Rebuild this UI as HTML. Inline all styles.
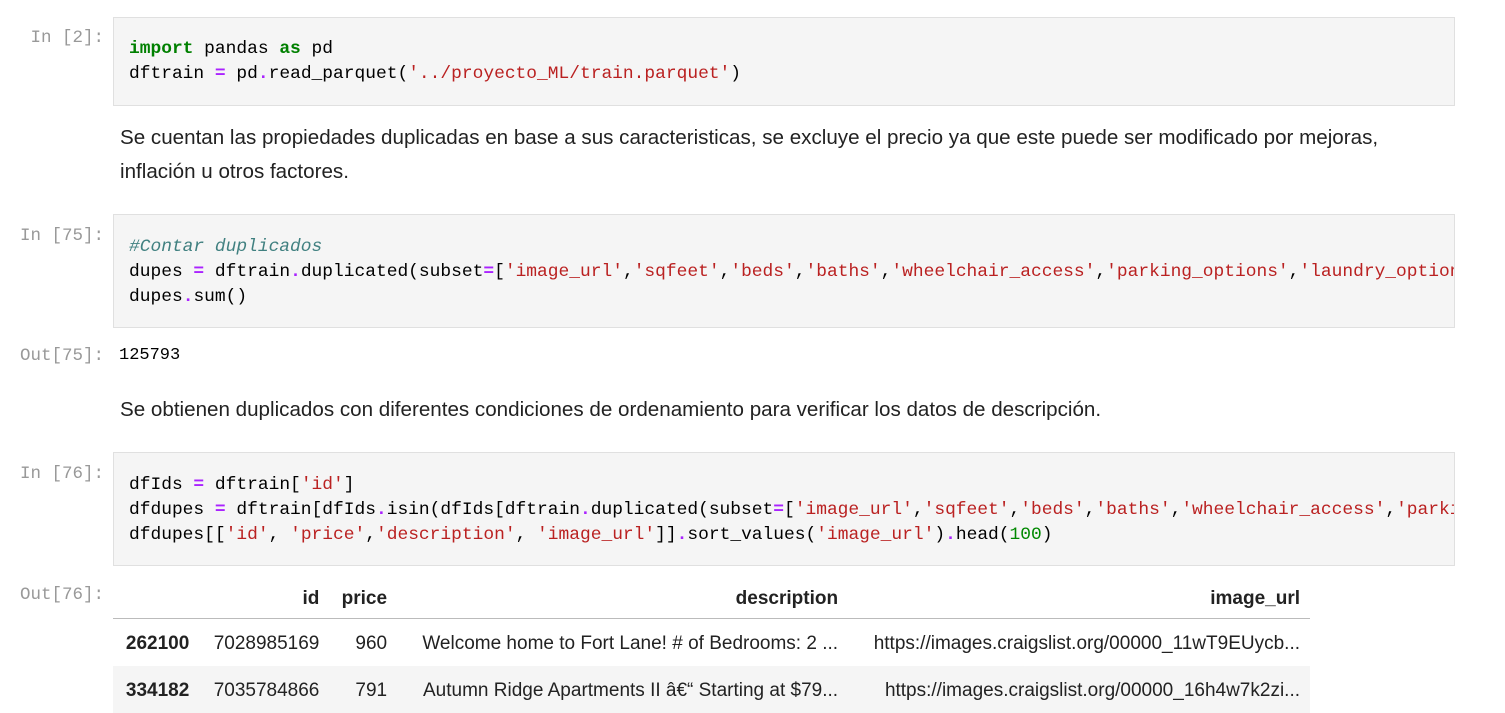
<!DOCTYPE html>
<html><head><meta charset="utf-8"><style>
body{margin:0;background:#fff;width:1505px;height:711px;overflow:hidden;position:relative;font-family:"Liberation Sans",sans-serif;color:#000}
.p{position:absolute;font-family:"Liberation Mono",monospace;font-size:17.5px;color:#999;text-align:right;width:104px;left:0}
.c{position:absolute;left:113px;width:1340px;background:#f5f5f5;border:1px solid #e0e0e0;overflow:hidden}
pre{margin:0;font-family:"Liberation Mono",monospace;font-size:17.9px;line-height:25px;padding:0 0 0 15px;white-space:pre;color:#000}
.k{color:#008000;font-weight:bold}.o{color:#aa22ff;font-weight:bold}.s{color:#ba2121}.m{color:#408080;font-style:italic}.n{color:#080}.b{color:#0055aa}
.t{position:absolute;left:120px;font-size:20.6px;line-height:34px;color:#222}
table{position:absolute;left:113px;top:580px;border-collapse:collapse;font-size:19px;color:#222;width:1197px}
th,td{padding:0 10px;text-align:right;white-space:nowrap}
thead th{height:38px;border-bottom:1.5px solid #bbb}
tbody td,tbody th{height:45px;padding-top:2px}
tbody tr:nth-child(2){background:#f5f5f5}
</style></head><body>
<div class="p" style="top:28px">In&nbsp;[2]:</div>
<div class="c" style="top:17px;height:87px"><pre style="padding-top:19px"><span class="k">import</span> pandas <span class="k">as</span> pd
dftrain <span class="o">=</span> pd<span class="o">.</span>read_parquet(<span class="s">'../proyecto_ML/train.parquet'</span>)</pre></div>
<div class="t" style="top:121px">Se cuentan las propiedades duplicadas en base a sus caracteristicas, se excluye el precio ya que este puede ser modificado por mejoras,<br>inflación u otros factores.</div>
<div class="p" style="top:226px">In&nbsp;[75]:</div>
<div class="c" style="top:214px;height:112px"><pre style="padding-top:20px"><span class="m">#Contar duplicados</span>
dupes <span class="o">=</span> dftrain<span class="o">.</span>duplicated(subset<span class="o">=</span>[<span class="s">'image_url'</span>,<span class="s">'sqfeet'</span>,<span class="s">'beds'</span>,<span class="s">'baths'</span>,<span class="s">'wheelchair_access'</span>,<span class="s">'parking_options'</span>,<span class="s">'laundry_options'</span>])
dupes<span class="o">.</span>sum()</pre></div>
<div class="p" style="top:346px">Out[75]:</div>
<pre style="position:absolute;left:104px;top:343px;font-size:17px">125793</pre>
<div class="t" style="top:393px">Se obtienen duplicados con diferentes condiciones de ordenamiento para verificar los datos de descripción.</div>
<div class="p" style="top:464px">In&nbsp;[76]:</div>
<div class="c" style="top:452px;height:112px"><pre style="padding-top:20px">dfIds <span class="o">=</span> dftrain[<span class="s">'id'</span>]
dfdupes <span class="o">=</span> dftrain[dfIds<span class="o">.</span>isin(dfIds[dftrain<span class="o">.</span>duplicated(subset<span class="o">=</span>[<span class="s">'image_url'</span>,<span class="s">'sqfeet'</span>,<span class="s">'beds'</span>,<span class="s">'baths'</span>,<span class="s">'wheelchair_access'</span>,<span class="s">'parking_options'</span>])])]
dfdupes[[<span class="s">'id'</span>, <span class="s">'price'</span>,<span class="s">'description'</span>, <span class="s">'image_url'</span>]]<span class="o">.</span>sort_values(<span class="s">'image_url'</span>)<span class="o">.</span>head(<span class="n">100</span>)</pre></div>
<div class="p" style="top:585px">Out[76]:</div>
<table><thead><tr><th></th><th>id</th><th>price</th><th>description</th><th>image_url</th></tr></thead>
<tbody><tr><th>262100</th><td>7028985169</td><td>960</td><td>Welcome home to Fort Lane! # of Bedrooms: 2 ...</td><td>https://images.craigslist.org/00000_11wT9EUycb...</td></tr>
<tr><th>334182</th><td>7035784866</td><td>791</td><td>Autumn Ridge Apartments II â€“ Starting at $79...</td><td>https://images.craigslist.org/00000_16h4w7k2zi...</td></tr></tbody></table>
</body></html>
